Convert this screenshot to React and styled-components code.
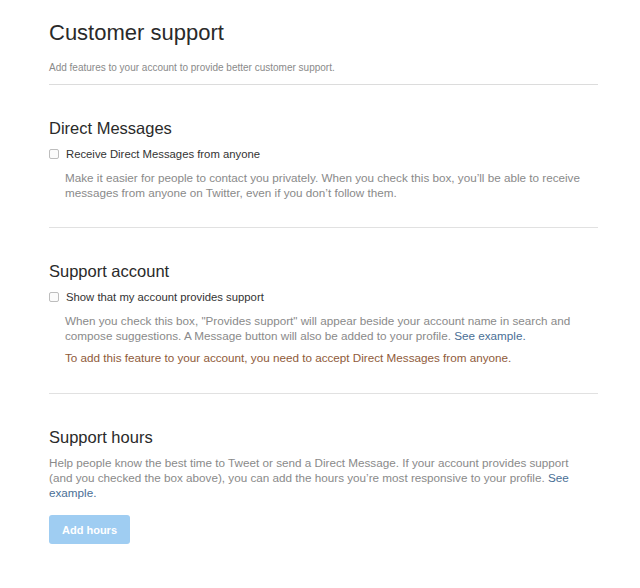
import React from "react";
import styled, { createGlobalStyle } from "styled-components";

const GlobalStyle = createGlobalStyle`
  body {
    margin: 0;
    background: #ffffff;
    font-family: "Liberation Sans", Arial, sans-serif;
  }
`;

const Page = styled.div`
  width: 549px;
  padding: 20px 0 40px 49px;
`;

const Header = styled.div`
  padding-bottom: 9px;
  border-bottom: 1px solid #dcdcdc;
`;

const Title = styled.h1`
  margin: 0;
  font-size: 22px;
  line-height: 26px;
  font-weight: 400;
  color: #2a2a2a;
`;

const Subtitle = styled.p`
  margin: 15px 0 0;
  font-size: 10px;
  line-height: 14px;
  color: #8a8a8a;
`;

const Section = styled.section`
  padding-top: 33px;
  padding-bottom: ${({ $pad }) => $pad || 27}px;
  border-bottom: ${({ $last }) => ($last ? "none" : "1px solid #e1e1e1")};
`;

const SectionTitle = styled.h2`
  margin: 0;
  font-size: 16.5px;
  line-height: 20px;
  font-weight: 400;
  color: #2a2a2a;
`;

const CheckRow = styled.label`
  display: flex;
  align-items: center;
  gap: 7px;
  margin-top: 8px;
  font-size: 11.3px;
  line-height: 16px;
  color: #333;
`;

const Box = styled.span`
  width: 8px;
  height: 8px;
  border: 1px solid #bdbdbd;
  border-radius: 2px;
  background: #fbfbfb;
  flex-shrink: 0;
`;

const Desc = styled.p`
  max-width: 535px;
  margin: 8px 0 0 ${({ $indent }) => ($indent ? 16 : 0)}px;
  font-size: 11.7px;
  line-height: 15px;
  color: #8a8a8a;
`;

const Warning = styled.p`
  margin: 7px 0 0 16px;
  font-size: 11.7px;
  line-height: 15px;
  color: #8f5b3a;
`;

const Link = styled.a`
  color: #4a6f96;
  text-decoration: none;
`;

const Button = styled.button`
  margin-top: 15px;
  width: 81px;
  height: 29px;
  border: none;
  border-radius: 3px;
  background: #9fcdf2;
  color: #fff;
  font-family: inherit;
  font-size: 11px;
  font-weight: 700;
  padding: 0;
`;

const App = () => {
  return (
    <>
      <GlobalStyle />
      <Page>
        <Header>
          <Title>Customer support</Title>
          <Subtitle>
            Add features to your account to provide better customer support.
          </Subtitle>
        </Header>

        <Section>
          <SectionTitle>Direct Messages</SectionTitle>
          <CheckRow>
            <Box />
            Receive Direct Messages from anyone
          </CheckRow>
          <Desc $indent>
            Make it easier for people to contact you privately. When you check
            this box, you’ll be able to receive messages from anyone on Twitter,
            even if you don’t follow them.
          </Desc>
        </Section>

        <Section $pad={28}>
          <SectionTitle>Support account</SectionTitle>
          <CheckRow>
            <Box />
            Show that my account provides support
          </CheckRow>
          <Desc $indent>
            When you check this box, "Provides support" will appear beside your
            account name in search and compose suggestions. A Message button
            will also be added to your profile. <Link>See example.</Link>
          </Desc>
          <Warning>
            To add this feature to your account, you need to accept Direct
            Messages from anyone.
          </Warning>
        </Section>

        <Section $last>
          <SectionTitle>Support hours</SectionTitle>
          <Desc>
            Help people know the best time to Tweet or send a Direct Message. If
            your account provides support (and you checked the box above), you
            can add the hours you’re most responsive to your profile.{" "}
            <Link>See example.</Link>
          </Desc>
          <Button>Add hours</Button>
        </Section>
      </Page>
    </>
  );
};

export default App;
